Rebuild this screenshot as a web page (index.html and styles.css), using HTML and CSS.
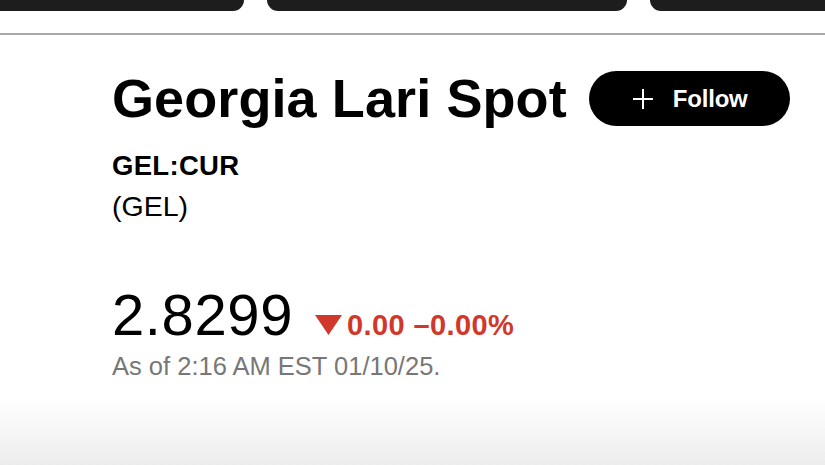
FILE: index.html
```html
<!DOCTYPE html>
<html lang="en">
<head>
<meta charset="utf-8">
<title>Georgia Lari Spot</title>
<link rel="stylesheet" href="styles.css">
</head>
<body>
<div class="page">
  <div class="tabs">
    <div class="tab tab-a"></div>
    <div class="tab tab-b"></div>
    <div class="tab tab-c"></div>
  </div>
  <div class="rule"></div>
  <main class="quote">
    <div class="head">
      <h1 class="title">Georgia Lari Spot</h1>
      <button class="follow">
        <svg class="plus" viewBox="0 0 20 20" width="20" height="20"><path d="M10 0v20M0 10h20" stroke="#fff" stroke-width="2" fill="none"/></svg>
        <span>Follow</span>
      </button>
    </div>
    <div class="ticker">GEL:CUR</div>
    <div class="code">(GEL)</div>
    <div class="price-row">
      <span class="price">2.8299</span>
      <span class="change">
        <svg class="down" viewBox="0 0 27 20" width="27" height="20"><path d="M0 0h27L13.5 20z" fill="#d0382b"/></svg>
        <span>0.00 –0.00%</span>
      </span>
    </div>
    <div class="asof">As of 2:16 AM EST 01/10/25.</div>
  </main>
  <div class="fade"></div>
</div>
</body>
</html>
```

FILE: styles.css
```css
* { box-sizing: border-box; }
html, body { margin: 0; padding: 0; }
body {
  width: 825px;
  height: 465px;
  overflow: hidden;
  background: #fff;
  font-family: "Liberation Sans", Arial, sans-serif;
  color: #000;
}
.page {
  position: relative;
  height: 465px;
  overflow: hidden;
}
.tabs {
  display: flex;
  gap: 23px;
  margin-left: -20px;
  height: 11px;
  overflow: hidden;
}
.tab {
  background: #1d1d1d;
  border-radius: 0 0 11px 11px;
  height: 11px;
  flex: none;
}
.tab-a { width: 264px; }
.tab-b { width: 360px; }
.tab-c { width: 200px; }
.rule {
  margin-top: 22px;
  height: 2px;
  background: #a8a8a8;
}
.quote {
  padding-left: 112px;
  padding-top: 36px;
}
.head {
  display: flex;
  align-items: center;
  gap: 22px;
  height: 55px;
}
.title {
  margin: 0;
  font-size: 54px;
  line-height: 55px;
  font-weight: 700;
  letter-spacing: 0.1px;
  white-space: nowrap;
}
.follow {
  display: flex;
  align-items: center;
  gap: 20px;
  width: 201px;
  height: 55px;
  padding: 0 0 0 44px;
  border: none;
  border-radius: 28px;
  background: #000;
  color: #fff;
  font-family: "Liberation Sans", Arial, sans-serif;
  font-size: 24px;
  font-weight: 700;
  letter-spacing: -0.2px;
  cursor: pointer;
}
.plus { flex: none; }
.ticker {
  margin-top: 19px;
  font-size: 27.5px;
  line-height: 41px;
  font-weight: 700;
  letter-spacing: 0.3px;
}
.code {
  font-size: 28.5px;
  line-height: 41px;
}
.price-row {
  margin-top: 56px;
  display: flex;
  align-items: baseline;
  height: 64px;
}
.price {
  font-size: 58px;
  line-height: 64px;
  letter-spacing: 0.6px;
}
.change {
  margin-left: 22px;
  display: flex;
  align-items: baseline;
  gap: 5px;
  color: #d0382b;
  font-size: 29px;
  font-weight: 700;
  letter-spacing: 0.4px;
}
.down { flex: none; margin-bottom: 1px; }
.asof {
  margin-top: 4px;
  font-size: 25.5px;
  line-height: 30px;
  color: #777;
}
.fade {
  position: absolute;
  left: 0;
  right: 0;
  bottom: 0;
  height: 68px;
  background: linear-gradient(to bottom, rgba(236,236,236,0) 0%, #f6f6f6 50%, #ececec 100%);
}
```
